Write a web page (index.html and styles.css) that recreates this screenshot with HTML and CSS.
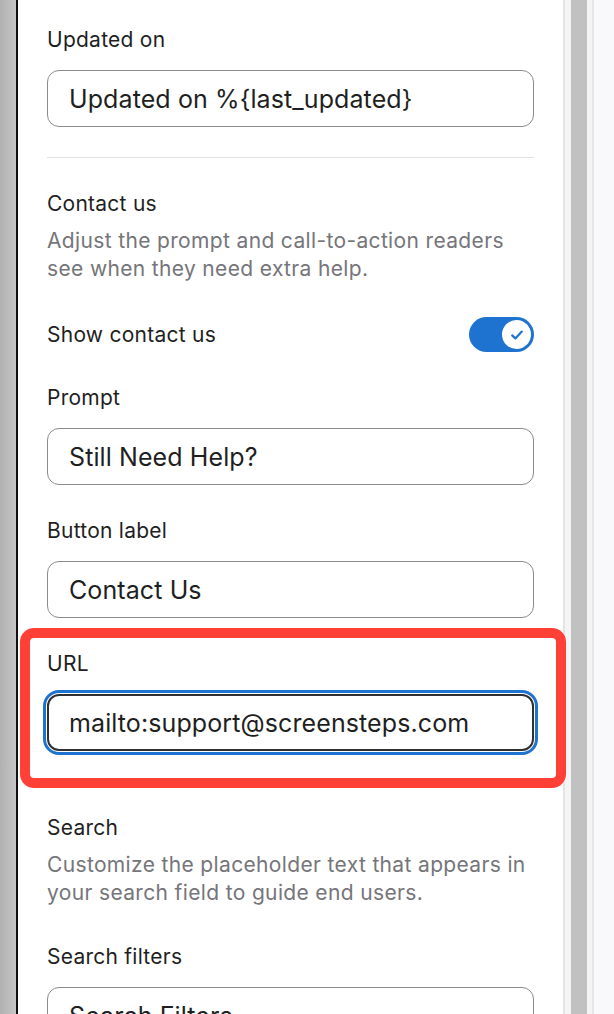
FILE: index.html
```html
<!DOCTYPE html>
<html lang="en">
  <head>
    <title>Footer settings</title>
    <link rel="stylesheet" href="styles.css">
  </head>
  <body>

  <div class="page">
    <div class="backdrop"></div>

    <div class="panel">
      <div class="field">
        <label class="field-label">Updated on</label>
        <input class="text-input" type="text" value="Updated on %{last_updated}">
      </div>

      <hr class="divider">

      <div class="section-head">
        <h3>Contact us</h3>
        <p>Adjust the prompt and call-to-action readers see when they need extra help.</p>
      </div>

      <div class="toggle-row">
        <span>Show contact us</span>
        <span class="toggle">
          <span class="toggle-knob">
            <svg width="16" height="16" viewBox="0 0 16 16">
              <path d="M3.2 8.4 L6.4 11.4 L12.8 4.6" fill="none" stroke="#1f73d0" stroke-width="2.2" stroke-linecap="round" stroke-linejoin="round"/>
            </svg>
          </span>
        </span>
      </div>

      <div class="field">
        <label class="field-label">Prompt</label>
        <input class="text-input" type="text" value="Still Need Help?">
      </div>

      <div class="field">
        <label class="field-label">Button label</label>
        <input class="text-input" type="text" value="Contact Us">
      </div>

      <div class="field highlighted">
        <label class="field-label">URL</label>
        <input class="text-input is-focused" type="text" value="mailto:support@screensteps.com">
      </div>

      <hr class="divider">

      <div class="section-head">
        <h3>Search</h3>
        <p>Customize the placeholder text that appears in your search field to guide end users.</p>
      </div>

      <div class="field spaced">
        <label class="field-label">Search filters</label>
        <input class="text-input" type="text" value="Search Filters">
      </div>
    </div>

    <div class="gutter">
      <div class="thumb"></div>
    </div>
    <div class="side"></div>
  </div>

  </body>
</html>
```

FILE: styles.css
```css
* {
  box-sizing: border-box;
}

body {
  margin: 0;
  font-family: "Inter", "Noto Sans", sans-serif;
  color: #1f1f1f;
}

.page {
  display: flex;
  height: 100vh;
  overflow: hidden;
  background-color: #f9f9fb;
}

.backdrop {
  width: 16px;
  flex-shrink: 0;
  background: linear-gradient(to right, #b1b1b1, #c6c6c6);
}

.panel {
  width: 547px;
  flex-shrink: 0;
  background-color: #fff;
  border-left: 2px solid #111;
  padding: 26px 29px 0 29px;
}

.field {
  display: flex;
  flex-direction: column;
  margin-top: 32px;
}

.field:first-child {
  margin-top: 0;
}

.field.spaced {
  margin-top: 36px;
}

.field-label {
  font-size: 21px;
  line-height: 28px;
  letter-spacing: 0.25px;
  margin-bottom: 16px;
}

.text-input {
  height: 57px;
  width: 100%;
  font-family: inherit;
  font-size: 25px;
  letter-spacing: 0.1px;
  color: #1f1f1f;
  padding: 0 21px;
  border: 1.5px solid #8b8b8f;
  border-radius: 12px;
  background-color: #fff;
  outline: none;
}

.text-input.is-focused {
  border: 2px solid #303030;
  outline: 3px solid #1f73d0;
  outline-offset: 1px;
  padding: 0 20px;
}

.highlighted {
  position: relative;
}

/* red annotation frame drawn over the URL field */
.highlighted::after {
  content: "";
  position: absolute;
  top: -22px;
  bottom: -37px;
  left: -27px;
  right: -32px;
  border: 10px solid #ff4036;
  border-radius: 14px;
  pointer-events: none;
}

.divider {
  border: none;
  border-top: 1px solid #e1e1e1;
  margin: 30px 0 0 0;
}

.section-head {
  margin-top: 32px;
}

.section-head h3 {
  margin: 0;
  font-size: 21px;
  line-height: 28px;
  letter-spacing: 0.25px;
  font-weight: 400;
}

.section-head p {
  margin: 9px 0 0 0;
  font-size: 21px;
  line-height: 28px;
  letter-spacing: 0.35px;
  color: #75757a;
}

.toggle-row {
  display: flex;
  justify-content: space-between;
  align-items: center;
  height: 35px;
  margin-top: 34px;
  font-size: 21px;
  letter-spacing: 0.25px;
}

.toggle {
  display: flex;
  align-items: center;
  justify-content: flex-end;
  width: 65px;
  height: 35px;
  padding: 3px;
  border-radius: 18px;
  background-color: #1f73d0;
}

.toggle-knob {
  display: flex;
  align-items: center;
  justify-content: center;
  width: 29px;
  height: 29px;
  border-radius: 50%;
  background-color: #fff;
}

.gutter {
  width: 31px;
  flex-shrink: 0;
  display: flex;
  padding: 0 5px 0 6px;
  background-color: #f4f4f4;
  border-left: 2px solid #e4e4e4;
  border-right: 2px solid #e6e6e6;
}

.thumb {
  width: 16px;
  background-color: #c1c1c1;
}

.side {
  flex: 1;
}
```
